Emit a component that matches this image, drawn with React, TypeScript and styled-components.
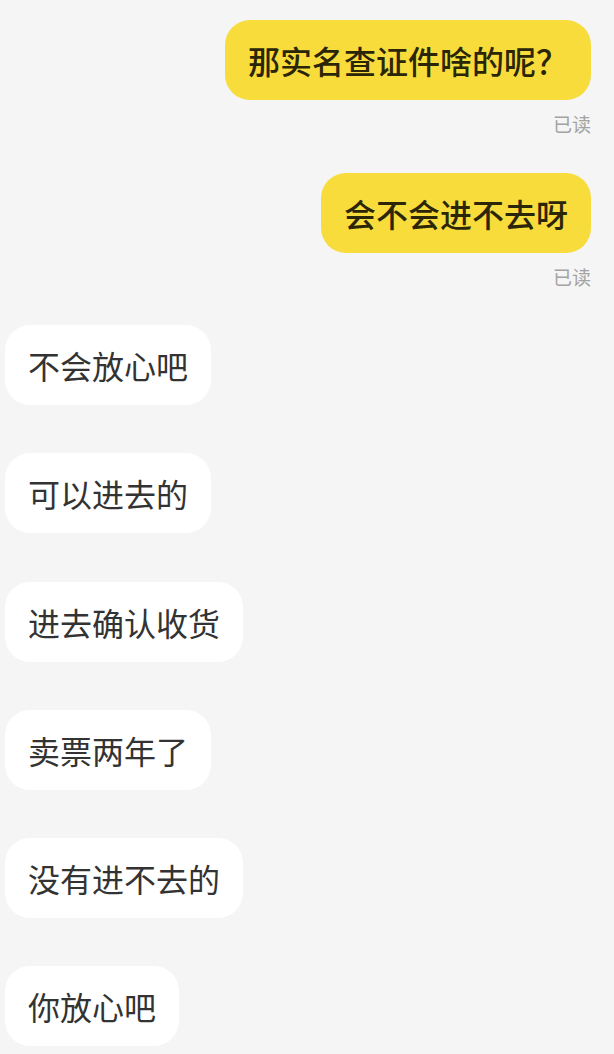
import React from "react";
import styled, { createGlobalStyle } from "styled-components";

const GlobalStyle = createGlobalStyle`
  html, body {
    margin: 0;
    padding: 0;
    background: #f5f5f5;
  }
  body {
    font-family: "Noto Sans CJK SC", "Noto Sans", sans-serif;
  }
`;

const Page = styled.div`
  width: 614px;
  min-height: 1054px;
  box-sizing: border-box;
  padding: 20px 23px 0 5px;
  background: #f5f5f5;
  display: flex;
  flex-direction: column;
`;

const Group = styled.div<{ $mine?: boolean; $gap: number }>`
  display: flex;
  flex-direction: column;
  align-items: ${(p) => (p.$mine ? "flex-end" : "flex-start")};
  margin-bottom: ${(p) => p.$gap}px;
`;

const Bubble = styled.div<{ $mine?: boolean }>`
  box-sizing: border-box;
  height: 80px;
  padding: 18px 23px;
  border-radius: 25px;
  font-size: 32px;
  line-height: 44px;
  white-space: nowrap;
  background: ${(p) => (p.$mine ? "#f8dc3b" : "#ffffff")};
  color: ${(p) => (p.$mine ? "#2b2608" : "#333333")};
  font-weight: ${(p) => (p.$mine ? 500 : 400)};
`;

const ReadMark = styled.div`
  margin-top: 12px;
  font-size: 19px;
  line-height: 24px;
  color: #a3a3a3;
`;

const mine = ["那实名查证件啥的呢？", "会不会进不去呀"];
const theirs = ["不会放心吧", "可以进去的", "进去确认收货", "卖票两年了", "没有进不去的", "你放心吧"];

export default function App() {
  return (
    <>
      <GlobalStyle />
      <Page>
        {mine.map((m, i) => (
          <Group key={m} $mine $gap={i === 0 ? 37 : 36}>
            <Bubble $mine>{m}</Bubble>
            <ReadMark>已读</ReadMark>
          </Group>
        ))}
        {theirs.map((t) => (
          <Group key={t} $gap={48.3}>
            <Bubble>{t}</Bubble>
          </Group>
        ))}
      </Page>
    </>
  );
}
